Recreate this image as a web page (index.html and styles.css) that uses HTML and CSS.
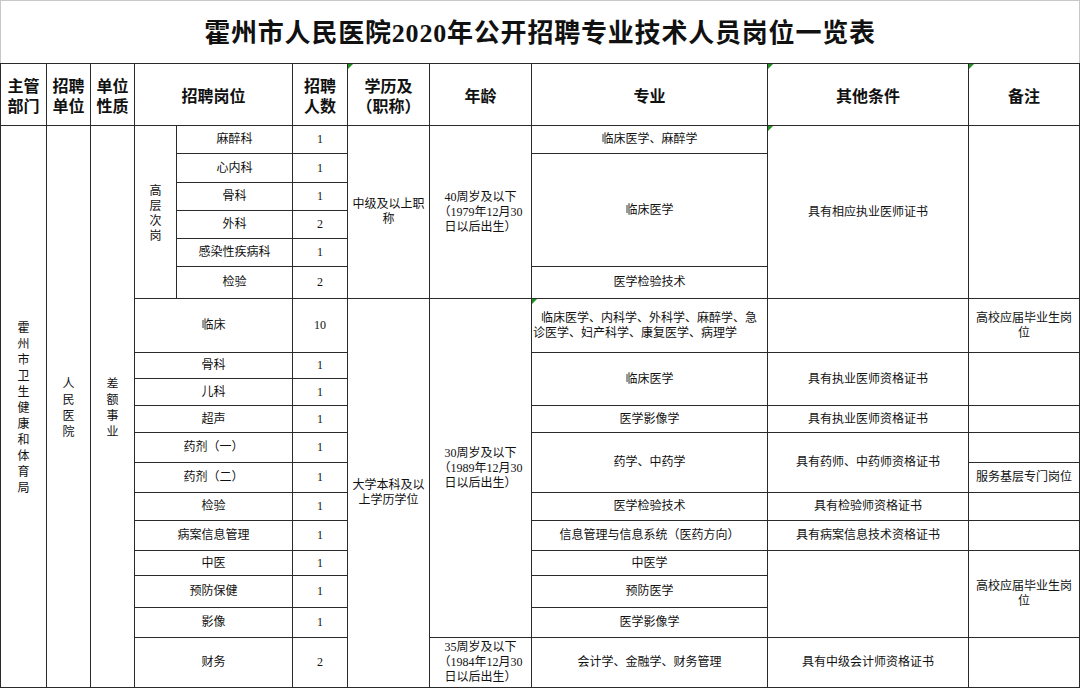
FILE: index.html
```html
<!DOCTYPE html>
<html lang="zh-CN">
<head>
<meta charset="utf-8">
<title>霍州市人民医院2020年公开招聘专业技术人员岗位一览表</title>
<link rel="stylesheet" href="styles.css">
</head>
<body>
<div class="title"><span>霍州市人民医院<span class="lat">2020</span>年公开招聘专业技术人员岗位一览表</span></div>
<div class="sheet">
  <div class="c h"><span class="t">主管<br>部门</span></div>
  <div class="c h"><span class="t">招聘<br>单位</span></div>
  <div class="c h"><span class="t">单位<br>性质</span></div>
  <div class="c h cs2">招聘岗位</div>
  <div class="c h"><span class="t">招聘<br>人数</span></div>
  <div class="c h note"><span class="t">学历及<br>（职称）</span></div>
  <div class="c h">年龄</div>
  <div class="c h">专业</div>
  <div class="c h note">其他条件</div>
  <div class="c h note">备注</div>

  <!-- row 1 -->
  <div class="c rs18"><span class="vt">霍州市卫生健康和体育局</span></div>
  <div class="c rs18"><span class="vt">人民医院</span></div>
  <div class="c rs18"><span class="vt">差额事业</span></div>
  <div class="c rs6"><span class="vt tight">高层次岗</span></div>
  <div class="c">麻醉科</div>
  <div class="c num">1</div>
  <div class="c rs6 wrap">中级及以上职称</div>
  <div class="c rs6"><span class="t">40周岁及以下<br>（1979年12月30<br>日以后出生）</span></div>
  <div class="c">临床医学、麻醉学</div>
  <div class="c rs6 note">具有相应执业医师证书</div>
  <div class="c rs6"></div>
  <!-- row 2 -->
  <div class="c">心内科</div>
  <div class="c num">1</div>
  <div class="c rs4">临床医学</div>
  <!-- row 3 -->
  <div class="c">骨科</div>
  <div class="c num">1</div>
  <!-- row 4 -->
  <div class="c">外科</div>
  <div class="c num">2</div>
  <!-- row 5 -->
  <div class="c">感染性疾病科</div>
  <div class="c num">1</div>
  <!-- row 6 -->
  <div class="c">检验</div>
  <div class="c num">2</div>
  <div class="c">医学检验技术</div>

  <!-- row 7 -->
  <div class="c cs2">临床</div>
  <div class="c num">10</div>
  <div class="c rs12 wrap">大学本科及以上学历学位</div>
  <div class="c rs11"><span class="t">30周岁及以下<br>（1989年12月30<br>日以后出生）</span></div>
  <div class="c left note"><div class="t"><span class="ind">临床医学、内科学、外科学、麻醉学、急</span><br>诊医学、妇产科学、康复医学、病理学</div></div>
  <div class="c"></div>
  <div class="c wrap">高校应届毕业生岗位</div>
  <!-- row 8 -->
  <div class="c cs2">骨科</div>
  <div class="c num">1</div>
  <div class="c rs2">临床医学</div>
  <div class="c rs2">具有执业医师资格证书</div>
  <div class="c rs2"></div>
  <!-- row 9 -->
  <div class="c cs2">儿科</div>
  <div class="c num">1</div>
  <!-- row 10 -->
  <div class="c cs2">超声</div>
  <div class="c num">1</div>
  <div class="c">医学影像学</div>
  <div class="c">具有执业医师资格证书</div>
  <div class="c"></div>
  <!-- row 11 -->
  <div class="c cs2">药剂（一）</div>
  <div class="c num">1</div>
  <div class="c rs2">药学、中药学</div>
  <div class="c rs2">具有药师、中药师资格证书</div>
  <div class="c"></div>
  <!-- row 12 -->
  <div class="c cs2">药剂（二）</div>
  <div class="c num">1</div>
  <div class="c">服务基层专门岗位</div>
  <!-- row 13 -->
  <div class="c cs2">检验</div>
  <div class="c num">1</div>
  <div class="c">医学检验技术</div>
  <div class="c">具有检验师资格证书</div>
  <div class="c"></div>
  <!-- row 14 -->
  <div class="c cs2">病案信息管理</div>
  <div class="c num">1</div>
  <div class="c">信息管理与信息系统（医药方向）</div>
  <div class="c">具有病案信息技术资格证书</div>
  <div class="c"></div>
  <!-- row 15 -->
  <div class="c cs2">中医</div>
  <div class="c num">1</div>
  <div class="c">中医学</div>
  <div class="c rs3"></div>
  <div class="c rs3 wrap">高校应届毕业生岗位</div>
  <!-- row 16 -->
  <div class="c cs2">预防保健</div>
  <div class="c num">1</div>
  <div class="c">预防医学</div>
  <!-- row 17 -->
  <div class="c cs2">影像</div>
  <div class="c num">1</div>
  <div class="c">医学影像学</div>
  <!-- row 18 -->
  <div class="c cs2">财务</div>
  <div class="c num">2</div>
  <div class="c"><span class="t">35周岁及以下<br>（1984年12月30<br>日以后出生）</span></div>
  <div class="c">会计学、金融学、财务管理</div>
  <div class="c">具有中级会计师资格证书</div>
  <div class="c"></div>
</div>
</body>
</html>
```
FILE: styles.css
```css
* {
  box-sizing: border-box;
}

html, body {
  margin: 0;
  padding: 0;
  background: #ffffff;
}

body {
  width: 1080px;
  height: 688px;
  overflow: hidden;
  font-family: "Liberation Serif", "Noto Sans CJK SC", serif;
  color: #111111;
}

.title {
  height: 63px;
  border-top: 1px solid #c8c8c8;
  border-left: 1px solid #c8c8c8;
  border-right: 1px solid #c8c8c8;
  display: flex;
  align-items: center;
  justify-content: center;
  padding-top: 0;
  font-family: "Noto Sans CJK SC", sans-serif;
  font-weight: 700;
  font-size: 26px;
  line-height: 34px;
  letter-spacing: 0.8px;
  color: #111111;
}

.title .lat {
  font-family: "Liberation Serif", serif;
  font-weight: 700;
}

.sheet {
  display: grid;
  grid-template-columns: 45px 43px 43px 41px 115px 54px 81px 101px 235px 200px 110px;
  grid-template-rows: 61px 27px 28px 27px 27px 27px 31px 53px 25px 26px 26px 29px 29px 27px 29px 24px 31px 29px 49px;
  gap: 1px;
  padding: 1px;
  background: #2a2a2a;
  width: 1080px;
}

.c {
  position: relative;
  background: #ffffff;
  display: flex;
  align-items: center;
  justify-content: center;
  text-align: center;
  font-size: 12px;
  line-height: 15px;
  padding: 0 2px;
}

.t {
  display: block;
}

.h {
  font-family: "Noto Sans CJK SC", sans-serif;
  font-weight: 700;
  font-size: 16px;
  line-height: 20px;
}

.num {
  font-size: 12px;
}

.wrap {
  padding: 0 3px;
}

.left {
  justify-content: flex-start;
  text-align: left;
  padding: 0 0 0 1px;
}

.ind {
  padding-left: 8px;
}

.vt {
  display: inline-block;
  width: 12px;
  line-height: 16px;
  word-break: break-all;
  font-family: "Noto Sans CJK SC", sans-serif;
}

.vt.tight {
  line-height: 15px;
}

.note::before {
  content: "";
  position: absolute;
  top: 0;
  left: 0;
  border-top: 5px solid #1f8f1f;
  border-right: 5px solid transparent;
}

.cs2 { grid-column: span 2; }
.rs2 { grid-row: span 2; }
.rs3 { grid-row: span 3; }
.rs4 { grid-row: span 4; }
.rs6 { grid-row: span 6; }
.rs11 { grid-row: span 11; }
.rs12 { grid-row: span 12; }
.rs18 { grid-row: span 18; }
```
